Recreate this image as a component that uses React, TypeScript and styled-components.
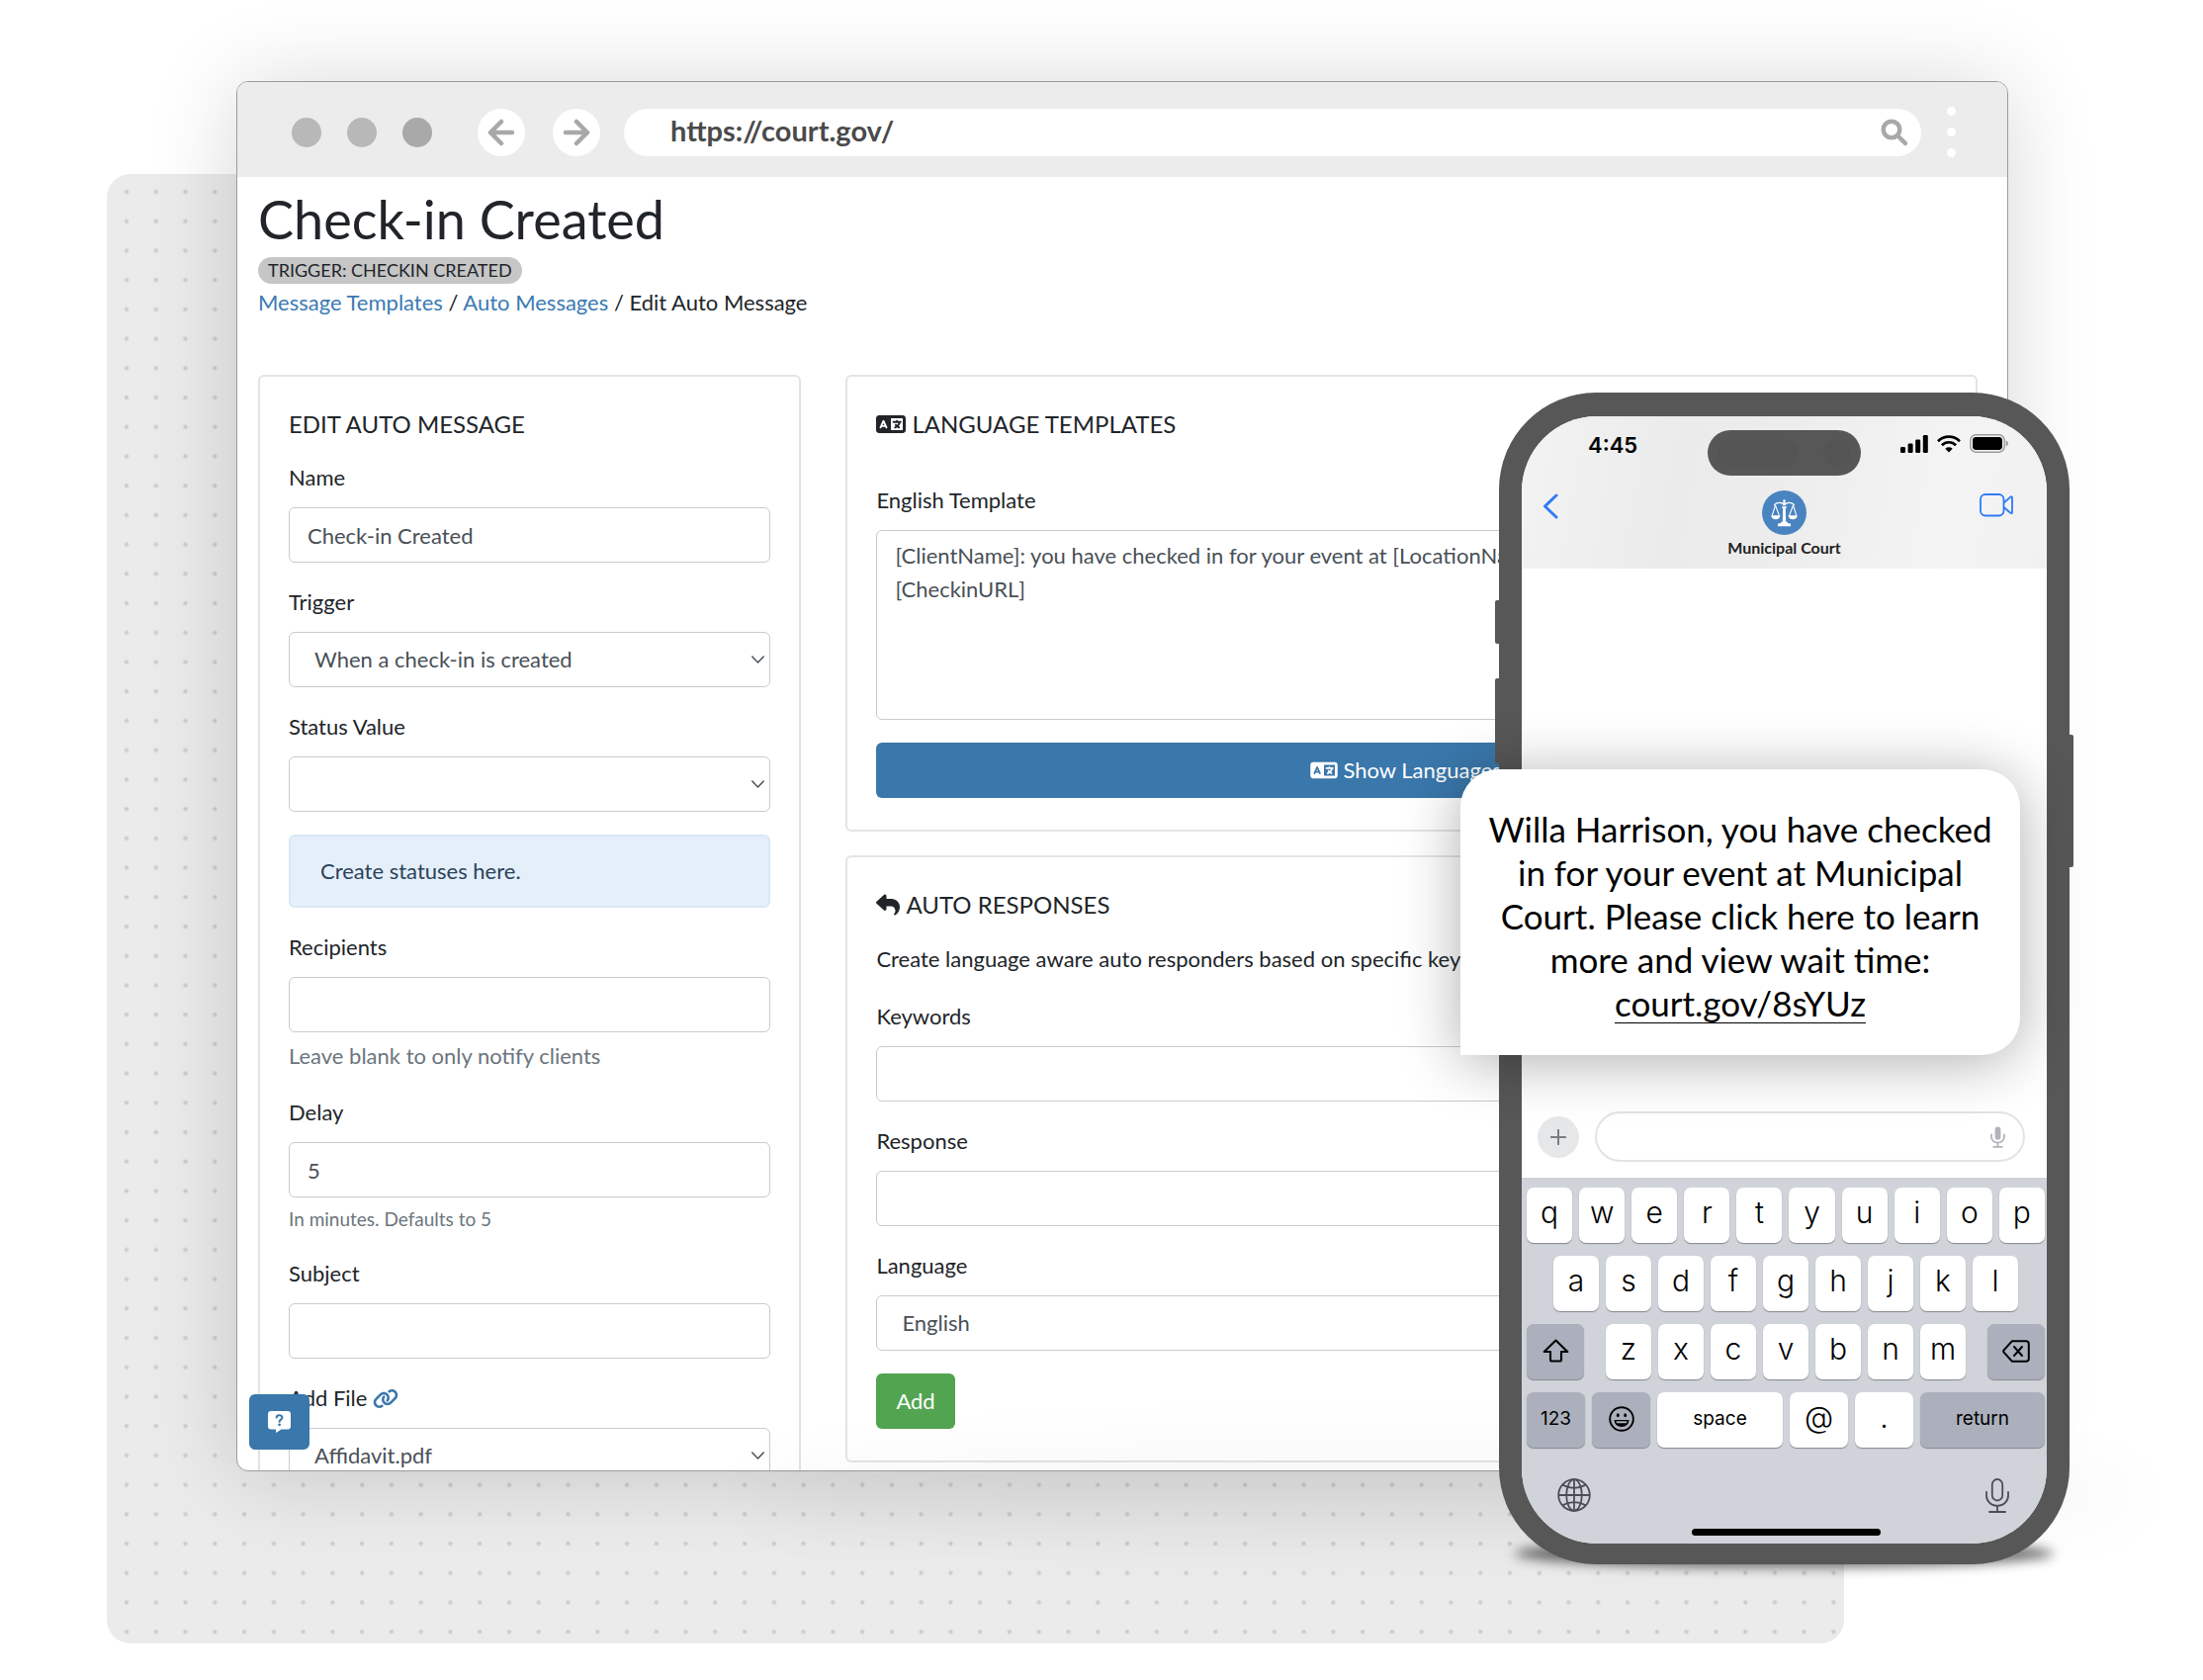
import React from "react";
import styled, { createGlobalStyle, css } from "styled-components";
import { FaLanguage, FaLink, FaReply } from "react-icons/fa6";

const ink = "#212529";
const blue = "#3a77ab";
const bezel = "#575757";
const sans = `Lato, "Open Sans", sans-serif`;
const phoneSans = `Inter, Roboto, sans-serif`;

const GlobalStyle = createGlobalStyle`
  *, *::before, *::after { box-sizing: border-box; }
  body { margin: 0; background: #fff; color: ${ink}; font: 400 22px/34px ${sans}; }
  button, input, select, textarea { font: inherit; color: inherit; margin: 0; }
  button { border: 0; padding: 0; cursor: pointer; }
  svg { display: block; flex: none; }
`;

/* ---------- stage ---------- */

const Stage = styled.main`
  position: relative;
  display: flex;
  height: 100vh;
  min-height: 1640px;
  padding: 82px 197px 211px 239px;
  overflow: hidden;
`;

const DottedBackdrop = styled.div`
  position: absolute;
  inset: 176px 363px 37px 108px;
  border-radius: 24px;
  background: radial-gradient(circle at 20px 18px, #cacaca 1px, transparent 3px) 0 0 / 30px 30px round #ebebeb;
`;

/* ---------- browser window ---------- */

const Browser = styled.section`
  position: relative;
  flex: 1;
  display: flex;
  flex-direction: column;
  min-width: 0;
  border: 1px solid #9c9c9c;
  border-radius: 12px;
  background: #fff;
  box-shadow: 0 4px 90px rgba(0, 0, 0, 0.16);
  overflow: hidden;
`;

const Toolbar = styled.header`
  flex: none;
  display: flex;
  align-items: center;
  gap: 24px;
  padding: 25px 52px 20px 55px;
  background: #ececec;
`;

const WindowDots = styled.div`
  display: flex;
  gap: 26px;
  margin-right: 22px;
`;

const WindowDot = styled.span<{ $dark?: boolean }>`
  width: 30px;
  height: 30px;
  border-radius: 50%;
  background: ${(p) => (p.$dark ? "#a9a9a9" : "#b8b8b8")};
`;

const NavButtons = styled.div`
  display: flex;
  gap: 28px;
`;

const NavButton = styled.button`
  display: grid;
  place-items: center;
  width: 48px;
  height: 48px;
  border-radius: 50%;
  background: #fff;
`;

const AddressBar = styled.div`
  flex: 1;
  display: flex;
  align-items: center;
  height: 48px;
  margin-right: 2px;
  padding: 0 12px 0 47px;
  border-radius: 24px;
  background: #fff;
`;

const AddressInput = styled.input`
  flex: 1;
  min-width: 0;
  height: 44px;
  margin-bottom: 4px;
  padding: 0;
  border: 0;
  background: none;
  color: #4a4a4a;
  font-size: 29px;
  font-weight: 700;
  outline: none;
`;

const Kebab = styled.button`
  display: grid;
  gap: 12px;
  background: none;
`;

const KebabDot = styled.span`
  width: 9px;
  height: 9px;
  border-radius: 50%;
  background: #fff;
`;

/* ---------- page in the browser ---------- */

const Page = styled.div`
  flex: 1;
  min-height: 0;
  overflow: hidden;
  padding: 11px 30px 0 21px;
`;

const PageTitle = styled.h1`
  margin: 0 0 6px;
  font-size: 54px;
  line-height: 64px;
  font-weight: 400;
`;

const Badge = styled.span`
  display: block;
  width: fit-content;
  padding: 0 10px;
  border-radius: 14px;
  background: #c6c6c6;
  font-size: 18px;
  line-height: 27px;
`;

const Breadcrumbs = styled.nav`
  margin: 3px 0 57px;
  line-height: 32px;
`;

const Crumb = styled.a`
  color: #3b7ab3;
  text-decoration: none;
`;

const Columns = styled.div`
  display: grid;
  grid-template-columns: 12fr 25fr;
  align-items: start;
  gap: 45px;
`;

const Stack = styled.div`
  display: grid;
  gap: 24px;
`;

const Card = styled.section`
  display: flex;
  flex-direction: column;
  gap: 23px;
  padding: 34px 29px 32px;
  border: 2px solid #e4e4e4;
  border-radius: 6px;
  background: #fff;
`;

const CardTitle = styled.h2<{ $spaced?: boolean }>`
  display: flex;
  align-items: center;
  gap: 6px;
  margin: 0 0 ${(p) => (p.$spaced ? 23 : 0)}px;
  font-size: 24px;
  line-height: 28px;
  font-weight: 400;
`;

const Description = styled.p`
  margin: 0;
  line-height: 36px;
`;

const FieldBox = styled.div`
  display: flex;
  flex-direction: column;
`;

const Label = styled.label`
  display: flex;
  align-items: center;
  gap: 6px;
  margin-bottom: 13px;
`;

const controlStyle = css`
  width: 100%;
  border: 1px solid #c6ccd2;
  border-radius: 6px;
  background: transparent;
  color: #495057;
  outline: none;
`;

const Input = styled.input`
  ${controlStyle}
  height: 56px;
  padding: 0 18px;
`;

const TextArea = styled.textarea`
  ${controlStyle}
  display: block;
  height: 192px;
  padding: 8px 18px;
  resize: none;
`;

const SelectBox = styled.div`
  display: grid;
  align-items: center;

  > * {
    grid-area: 1 / 1;
  }

  > svg {
    justify-self: end;
    margin-right: 6px;
    pointer-events: none;
  }
`;

const Select = styled.select`
  ${controlStyle}
  height: 56px;
  padding: 0 25px;
  appearance: none;
`;

const Hint = styled.small<{ $small?: boolean }>`
  margin-top: 7px;
  color: #6c757d;
  font-size: ${(p) => (p.$small ? 19 : 22)}px;
  line-height: ${(p) => (p.$small ? 30 : 34)}px;
`;

const Notice = styled.div`
  padding: 18px 30px;
  border: 2px solid #dae8f6;
  border-radius: 6px;
  background: #e4effa;
  color: #2b435b;
`;

const PrimaryButton = styled.button`
  display: flex;
  align-items: center;
  justify-content: center;
  gap: 6px;
  height: 56px;
  padding-right: 12px;
  border-radius: 6px;
  background: ${blue};
  color: #fff;
`;

const AddButton = styled.button`
  align-self: flex-start;
  height: 56px;
  padding: 0 20px;
  border-radius: 6px;
  background: #53a451;
  color: #fff;
`;

const HelpButton = styled.button`
  position: absolute;
  left: 12px;
  bottom: 21px;
  display: grid;
  place-items: center;
  width: 61px;
  height: 56px;
  border-radius: 6px;
  background: ${blue};
`;

/* ---------- phone ---------- */

const PhonePlace = styled.aside`
  position: absolute;
  top: 397px;
  right: 135px;
  width: 577px;
`;

const FloorHaze = styled.div`
  position: absolute;
  left: -760px;
  right: -70px;
  bottom: 20px;
  height: 100px;
  border-radius: 50%;
  background: rgba(0, 0, 0, 0.03);
  filter: blur(30px);
`;

const FloorShadow = styled.div`
  position: absolute;
  left: 16px;
  right: 16px;
  bottom: -3px;
  height: 28px;
  border-radius: 50% / 60%;
  background: rgba(0, 0, 0, 0.55);
  filter: blur(6px);
`;

const SideButton = styled.span<{ $side: "left" | "right"; $top: number; $height: number }>`
  position: absolute;
  ${(p) => p.$side}: -4px;
  top: ${(p) => p.$top}px;
  width: 8px;
  height: ${(p) => p.$height}px;
  border-radius: 2px;
  background: ${bezel};
`;

const PhoneBody = styled.div`
  position: relative;
  padding: 24px 23px 21px;
  border-radius: 98px;
  background: ${bezel};
`;

const Screen = styled.div`
  display: flex;
  flex-direction: column;
  border-radius: 76px;
  background: #fff;
  color: #000;
  font-family: ${phoneSans};
  overflow: hidden;
`;

const ChatHeader = styled.header`
  padding: 14px 34px 10px 21px;
  background: linear-gradient(100deg, #f3f3f3, #ebebeb 30%, #ededed 50%, #f4f4f5 80%, #f1f1f1);
`;

const StatusBar = styled.div`
  display: grid;
  grid-template-columns: 1fr 155px 1fr;
  align-items: start;
  margin-right: -13px;
`;

const Clock = styled.span`
  padding-left: 46px;
  font-size: 22px;
  font-weight: 600;
  line-height: 30px;
`;

const Island = styled.span`
  display: flex;
  align-items: center;
  justify-content: space-between;
  height: 46px;
  padding: 0 10px;
  border-radius: 23px;
  background: ${bezel};
`;

const IslandSensor = styled.span<{ $width: number }>`
  width: ${(p) => p.$width}px;
  height: 28px;
  border-radius: 14px;
  background: #545454;
`;

const StatusIcons = styled.div`
  display: flex;
  align-items: center;
  justify-content: flex-end;
  gap: 9px;
  padding: 4px 18px 0 0;
`;

const ContactRow = styled.div`
  display: grid;
  grid-template-columns: 1fr auto 1fr;
  align-items: start;
  padding-top: 15px;
`;

const IconButton = styled.button<{ $end?: boolean }>`
  justify-self: ${(p) => (p.$end ? "end" : "start")};
  padding-top: 3px;
  background: none;
`;

const Contact = styled.div`
  display: grid;
  justify-items: center;
  gap: 2px;
  padding-left: 13px;
  color: #222;
  font: 700 16px/22px ${sans};
`;

const Avatar = styled.span`
  display: grid;
  place-items: center;
  width: 45px;
  height: 45px;
  border-radius: 50%;
  background: #4a84c0;
`;

const Conversation = styled.div`
  height: 549px;
`;

const Composer = styled.form`
  display: flex;
  align-items: center;
  gap: 16px;
  padding: 0 22px 16px 16px;
`;

const PlusButton = styled.button`
  display: grid;
  place-items: center;
  width: 42px;
  height: 42px;
  border-radius: 50%;
  background: #e6e7e9;
`;

const MessageBox = styled.div`
  flex: 1;
  display: flex;
  align-items: center;
  height: 51px;
  padding: 0 18px 0 22px;
  border: 2px solid #e3e3e5;
  border-radius: 26px;
`;

const MessageInput = styled.input`
  flex: 1;
  min-width: 0;
  border: 0;
  background: none;
  outline: none;
`;

const Keyboard = styled.div`
  display: grid;
  gap: 13px;
  padding: 10px 2px 8px 5px;
  background: #d0d3d9;
`;

const KeyRow = styled.div<{ $inset?: boolean }>`
  display: flex;
  gap: 7px;
  padding: 0 ${(p) => (p.$inset ? 27 : 0)}px;
`;

const Key = styled.button<{ $grow?: number; $grey?: boolean; $word?: boolean }>`
  flex: ${(p) => p.$grow ?? 46} 1 0;
  display: flex;
  align-items: center;
  justify-content: center;
  min-width: 0;
  height: 56px;
  padding-bottom: ${(p) => (p.$word ? 2 : 6)}px;
  border-radius: 7px;
  background: ${(p) => (p.$grey ? "#abb0bc" : "#fff")};
  box-shadow: 0 1px 1px #85878c;
  font-size: ${(p) => (p.$word ? 19 : 30)}px;
  font-weight: ${(p) => (p.$word ? 400 : 300)};
  line-height: 34px;
`;

const MiddleKeys = styled.div`
  flex: 364 1 0;
  display: flex;
  gap: 7px;
  padding: 0 15px;
`;

const KeyboardFooter = styled.div`
  display: flex;
  justify-content: space-between;
  padding: 18px 36px 0 31px;
`;

const HomeBar = styled.span`
  justify-self: center;
  width: 191px;
  height: 7px;
  margin-top: 3px;
  border-radius: 4px;
  background: #000;
`;

const Bubble = styled.p`
  position: absolute;
  top: 381px;
  left: -39px;
  width: 566px;
  margin: 0;
  padding: 38px 20px 31px;
  border-radius: 38px 38px 38px 0;
  background: #fff;
  box-shadow: 0 6px 60px rgba(0, 0, 0, 0.32);
  color: #000;
  font-size: 35px;
  line-height: 44px;
  text-align: center;
`;

const BubbleLink = styled.a`
  color: inherit;
  text-decoration: underline 1px;
  text-decoration-skip-ink: none;
  text-underline-offset: 6px;
`;

/* ---------- drawings ---------- */

const Arrow = ({ flip }: { flip?: boolean }) => (
  <svg width="28" height="28" viewBox="0 0 28 28" fill="none" stroke="#a8a8a8" strokeWidth="4.5" strokeLinecap="round" strokeLinejoin="round">
    <path d={flip ? "M3 14H25M14 3L25 14L14 25" : "M25 14H3M14 3L3 14L14 25"} />
  </svg>
);

const SearchIcon = () => (
  <svg width="30" height="30" viewBox="0 0 30 30" fill="none" stroke="#a8a8a8" strokeWidth="4.5" strokeLinecap="round">
    <circle cx="12" cy="12" r="8.3" />
    <path d="M18.5 18.5L26 26" />
  </svg>
);

const Chevron = () => (
  <svg width="13" height="8" viewBox="0 0 13 8" fill="none" stroke="#495057" strokeWidth="1.5" strokeLinecap="round" strokeLinejoin="round">
    <path d="M0.8 1L6.5 7L12.2 1" />
  </svg>
);

const HelpIcon = () => (
  <svg width="23" height="22" viewBox="0 0 23 22">
    <path d="M3 0H20A3 3 0 0 1 23 3V15.5A3 3 0 0 1 20 18.5H13.5L8.6 21.8Q8 22 8 21.2V18.5H3A3 3 0 0 1 0 15.5V3A3 3 0 0 1 3 0Z" fill="#fff" />
    <path d="M8.6 6.6C8.8 3.4 14.4 3.4 14.4 6.6C14.4 8.6 11.6 8.7 11.6 10.8" fill="none" stroke={blue} strokeWidth="2" strokeLinecap="round" />
    <circle cx="11.6" cy="13.8" r="1.4" fill={blue} />
  </svg>
);

const SignalIcon = () => (
  <svg width="28" height="18" viewBox="0 0 28 18">
    <rect x="0" y="12" width="5" height="6" rx="1.3" />
    <rect x="7.6" y="8.5" width="5" height="9.5" rx="1.3" />
    <rect x="15.2" y="4.5" width="5" height="13.5" rx="1.3" />
    <rect x="22.8" y="0" width="5" height="18" rx="1.3" />
  </svg>
);

const WifiIcon = () => (
  <svg width="24" height="18" viewBox="0 0 24 18">
    <path d="M12 17.6L8.3 13.8A5.4 5.4 0 0 1 15.7 13.8Z" />
    <path d="M4.9 10.2A10 10 0 0 1 19.1 10.2" fill="none" stroke="#000" strokeWidth="2.7" />
    <path d="M1 6.2A15.6 15.6 0 0 1 23 6.2" fill="none" stroke="#000" strokeWidth="2.7" />
  </svg>
);

const BatteryIcon = () => (
  <svg width="39" height="19" viewBox="0 0 39 19">
    <rect x="0.8" y="0.8" width="34.4" height="17.4" rx="5.4" fill="none" stroke="#9a9a9a" strokeWidth="1.4" />
    <rect x="3" y="3" width="30" height="13" rx="3.4" />
    <path d="M36.8 6.4Q39 7.4 39 9.5T36.8 12.6Z" fill="#9a9a9a" />
  </svg>
);

const BackIcon = () => (
  <svg width="16" height="26" viewBox="0 0 16 26" fill="none" stroke="#2f7bf6" strokeWidth="3" strokeLinecap="round" strokeLinejoin="round">
    <path d="M14 2L2.5 13L14 24" />
  </svg>
);

const VideoIcon = () => (
  <svg width="34" height="24" viewBox="0 0 34 24" fill="none" stroke="#2f7bf6" strokeWidth="1.8" strokeLinejoin="round">
    <rect x="1" y="1" width="23.5" height="21.5" rx="5" />
    <path d="M24.5 9.5L31.3 3.6Q33 2.6 33 4.4V19Q33 20.8 31.3 19.8L24.5 14" />
  </svg>
);

const ScalesIcon = () => (
  <svg width="27" height="28" viewBox="0 0 80 84" fill="#fff">
    <circle cx="40" cy="5" r="4" />
    <path d="M34 10H46L44 19H36Z" />
    <path d="M9 17Q22 6 35 13M71 17Q58 6 45 13" fill="none" stroke="#fff" strokeWidth="4" />
    <path d="M33 22H47V26H44L45 68H50V73H58Q60 76 60 82H20Q20 76 22 73H30V68H35L36 26H33Z" />
    <path d="M13 18L3 50M13 18L25 50M67 18L55 50M67 18L77 50" fill="none" stroke="#fff" strokeWidth="3.2" />
    <path d="M0 49H28Q26 61 14 61T0 49ZM52 49H80Q78 61 66 61T52 49Z" />
  </svg>
);

const PlusIcon = () => (
  <svg width="16" height="16" viewBox="0 0 16 16" stroke="#7a7d82" strokeWidth="2" strokeLinecap="round">
    <path d="M8 0.8V15.2M0.8 8H15.2" />
  </svg>
);

const DictateIcon = () => (
  <svg width="15" height="22" viewBox="0 0 15 22" fill="none" stroke="#b0b3bb" strokeWidth="1.8" strokeLinecap="round">
    <rect x="4.6" y="0.6" width="5.8" height="13" rx="2.9" fill="#b0b3bb" stroke="none" />
    <path d="M1 8.5V10.5A6.5 6.2 0 0 0 14 10.5V8.5M7.5 17V20.5M3.2 20.8H11.8" />
  </svg>
);

const ShiftIcon = () => (
  <svg width="27" height="24" viewBox="0 0 27 24" fill="none" stroke="#000" strokeWidth="2.1" strokeLinejoin="round">
    <path d="M13.5 1.5L25.3 13H19V21Q19 22.5 17.5 22.5H9.5Q8 22.5 8 21V13H1.7Z" />
  </svg>
);

const DeleteIcon = () => (
  <svg width="28" height="23" viewBox="0 0 28 23" fill="none" stroke="#000" strokeWidth="2" strokeLinecap="round" strokeLinejoin="round">
    <path d="M10 1.2H24Q26.8 1.2 26.8 4V19Q26.8 21.8 24 21.8H10L1.6 12.6Q0.8 11.5 1.6 10.4Z" />
    <path d="M12 7L20 16M20 7L12 16" />
  </svg>
);

const EmojiIcon = () => (
  <svg width="26" height="26" viewBox="0 0 26 26">
    <circle cx="13" cy="13" r="11.8" fill="none" stroke="#000" strokeWidth="1.9" />
    <ellipse cx="9.3" cy="9.3" rx="1.4" ry="2" />
    <ellipse cx="16.7" cy="9.3" rx="1.4" ry="2" />
    <path d="M5.5 14H20.5Q20 21 13 21T5.5 14Z" />
    <path d="M7.4 15.2H18.6L18 17.2H8Z" fill="#abb0bc" />
  </svg>
);

const GlobeIcon = () => (
  <svg width="34" height="34" viewBox="0 0 34 34" fill="none" stroke="#4b4e54" strokeWidth="1.8">
    <circle cx="17" cy="17" r="15.8" />
    <ellipse cx="17" cy="17" rx="7.8" ry="15.8" />
    <path d="M17 1.2V32.8M1.2 17H32.8M5.2 6.6Q17 13 28.8 6.6M5.2 27.4Q17 21 28.8 27.4" />
  </svg>
);

const MicIcon = () => (
  <svg width="24" height="35" viewBox="0 0 24 35" fill="none" stroke="#4b4e54" strokeWidth="1.8" strokeLinecap="round">
    <rect x="6.8" y="1" width="10.4" height="21.5" rx="5.2" />
    <path d="M1 14V17.5A11 10.5 0 0 0 23 17.5V14M12 28V33.5M4 34H20" />
  </svg>
);

const TitleLanguageIcon = styled(FaLanguage)`
  width: 30px;
  height: 24px;
`;

const ButtonLanguageIcon = styled(FaLanguage)`
  width: 28px;
  height: 22px;
`;

const FileLinkIcon = styled(FaLink)`
  width: 26px;
  height: 21px;
  color: ${blue};
`;

/* ---------- pieces ---------- */

type FieldProps = { id: string; label: React.ReactNode; children: React.ReactNode };

const Field = ({ id, label, children }: FieldProps) => (
  <FieldBox>
    <Label htmlFor={id}>{label}</Label>
    {children}
  </FieldBox>
);

const SelectField = ({ id, label, value }: { id: string; label: React.ReactNode; value: string }) => (
  <Field id={id} label={label}>
    <SelectBox>
      <Select id={id} defaultValue={value}>
        <option value={value}>{value}</option>
      </Select>
      <Chevron />
    </SelectBox>
  </Field>
);

const letters = (row: string) =>
  row.split("").map((c) => (
    <Key key={c} type="button">
      {c}
    </Key>
  ));

const Phone = () => (
  <PhonePlace>
    <FloorHaze />
    <FloorShadow />
    <SideButton $side="left" $top={210} $height={44} />
    <SideButton $side="left" $top={289} $height={86} />
    <SideButton $side="right" $top={346} $height={134} />
    <PhoneBody>
      <Screen>
        <ChatHeader>
          <StatusBar>
            <Clock>4:45</Clock>
            <Island>
              <IslandSensor $width={82} />
              <IslandSensor $width={28} />
            </Island>
            <StatusIcons>
              <SignalIcon />
              <WifiIcon />
              <BatteryIcon />
            </StatusIcons>
          </StatusBar>
          <ContactRow>
            <IconButton type="button" aria-label="Back">
              <BackIcon />
            </IconButton>
            <Contact>
              <Avatar>
                <ScalesIcon />
              </Avatar>
              Municipal Court
            </Contact>
            <IconButton type="button" aria-label="Video call" $end>
              <VideoIcon />
            </IconButton>
          </ContactRow>
        </ChatHeader>
        <Conversation />
        <Composer>
          <PlusButton type="button" aria-label="Attach">
            <PlusIcon />
          </PlusButton>
          <MessageBox>
            <MessageInput aria-label="Message" />
            <DictateIcon />
          </MessageBox>
        </Composer>
        <Keyboard>
          <KeyRow>{letters("qwertyuiop")}</KeyRow>
          <KeyRow $inset>{letters("asdfghjkl")}</KeyRow>
          <KeyRow>
            <Key type="button" $grow={58} $grey $word aria-label="Shift">
              <ShiftIcon />
            </Key>
            <MiddleKeys>{letters("zxcvbnm")}</MiddleKeys>
            <Key type="button" $grow={58} $grey $word aria-label="Delete">
              <DeleteIcon />
            </Key>
          </KeyRow>
          <KeyRow>
            <Key type="button" $grow={59} $grey $word>
              123
            </Key>
            <Key type="button" $grow={59} $grey $word aria-label="Emoji">
              <EmojiIcon />
            </Key>
            <Key type="button" $grow={127} $word>
              space
            </Key>
            <Key type="button" $grow={59}>
              @
            </Key>
            <Key type="button" $grow={59}>
              .
            </Key>
            <Key type="button" $grow={126} $grey $word>
              return
            </Key>
          </KeyRow>
          <KeyboardFooter>
            <GlobeIcon />
            <MicIcon />
          </KeyboardFooter>
          <HomeBar />
        </Keyboard>
      </Screen>
    </PhoneBody>
    <Bubble>
      Willa Harrison, you have checked in for your event at Municipal Court. Please click here to learn more and view
      wait time: <BubbleLink href="#checkin">court.gov/8sYUz</BubbleLink>
    </Bubble>
  </PhonePlace>
);

export default function App() {
  return (
    <>
      <GlobalStyle />
      <Stage>
        <DottedBackdrop />
        <Browser>
          <Toolbar>
            <WindowDots>
              <WindowDot />
              <WindowDot />
              <WindowDot $dark />
            </WindowDots>
            <NavButtons>
              <NavButton type="button" aria-label="Back">
                <Arrow />
              </NavButton>
              <NavButton type="button" aria-label="Forward">
                <Arrow flip />
              </NavButton>
            </NavButtons>
            <AddressBar>
              <AddressInput aria-label="Address" defaultValue="https://court.gov/" />
              <SearchIcon />
            </AddressBar>
            <Kebab type="button" aria-label="Menu">
              <KebabDot />
              <KebabDot />
              <KebabDot />
            </Kebab>
          </Toolbar>

          <Page>
            <PageTitle>Check-in Created</PageTitle>
            <Badge>TRIGGER: CHECKIN CREATED</Badge>
            <Breadcrumbs>
              <Crumb href="#templates">Message Templates</Crumb> / <Crumb href="#auto">Auto Messages</Crumb> / Edit Auto
              Message
            </Breadcrumbs>

            <Columns>
              <Card>
                <CardTitle>EDIT AUTO MESSAGE</CardTitle>
                <Field id="name" label="Name">
                  <Input id="name" defaultValue="Check-in Created" />
                </Field>
                <SelectField id="trigger" label="Trigger" value="When a check-in is created" />
                <SelectField id="status" label="Status Value" value="" />
                <Notice>Create statuses here.</Notice>
                <Field id="recipients" label="Recipients">
                  <Input id="recipients" />
                  <Hint>Leave blank to only notify clients</Hint>
                </Field>
                <Field id="delay" label="Delay">
                  <Input id="delay" defaultValue="5" />
                  <Hint $small>In minutes. Defaults to 5</Hint>
                </Field>
                <Field id="subject" label="Subject">
                  <Input id="subject" />
                </Field>
                <SelectField
                  id="file"
                  label={
                    <>
                      Add File <FileLinkIcon />
                    </>
                  }
                  value="Affidavit.pdf"
                />
              </Card>

              <Stack>
                <Card>
                  <CardTitle $spaced>
                    <TitleLanguageIcon />
                    LANGUAGE TEMPLATES
                  </CardTitle>
                  <Field id="english" label="English Template">
                    <TextArea
                      id="english"
                      defaultValue={"[ClientName]: you have checked in for your event at [LocationName]\n[CheckinURL]"}
                    />
                  </Field>
                  <PrimaryButton type="button">
                    <ButtonLanguageIcon />
                    Show Languages
                  </PrimaryButton>
                </Card>

                <Card>
                  <CardTitle>
                    <FaReply />
                    AUTO RESPONSES
                  </CardTitle>
                  <Description>Create language aware auto responders based on specific keywords</Description>
                  <Field id="keywords" label="Keywords">
                    <Input id="keywords" />
                  </Field>
                  <Field id="response" label="Response">
                    <Input id="response" />
                  </Field>
                  <SelectField id="language" label="Language" value="English" />
                  <AddButton type="button">Add</AddButton>
                </Card>
              </Stack>
            </Columns>
          </Page>

          <HelpButton type="button" aria-label="Help">
            <HelpIcon />
          </HelpButton>
        </Browser>

        <Phone />
      </Stage>
    </>
  );
}
